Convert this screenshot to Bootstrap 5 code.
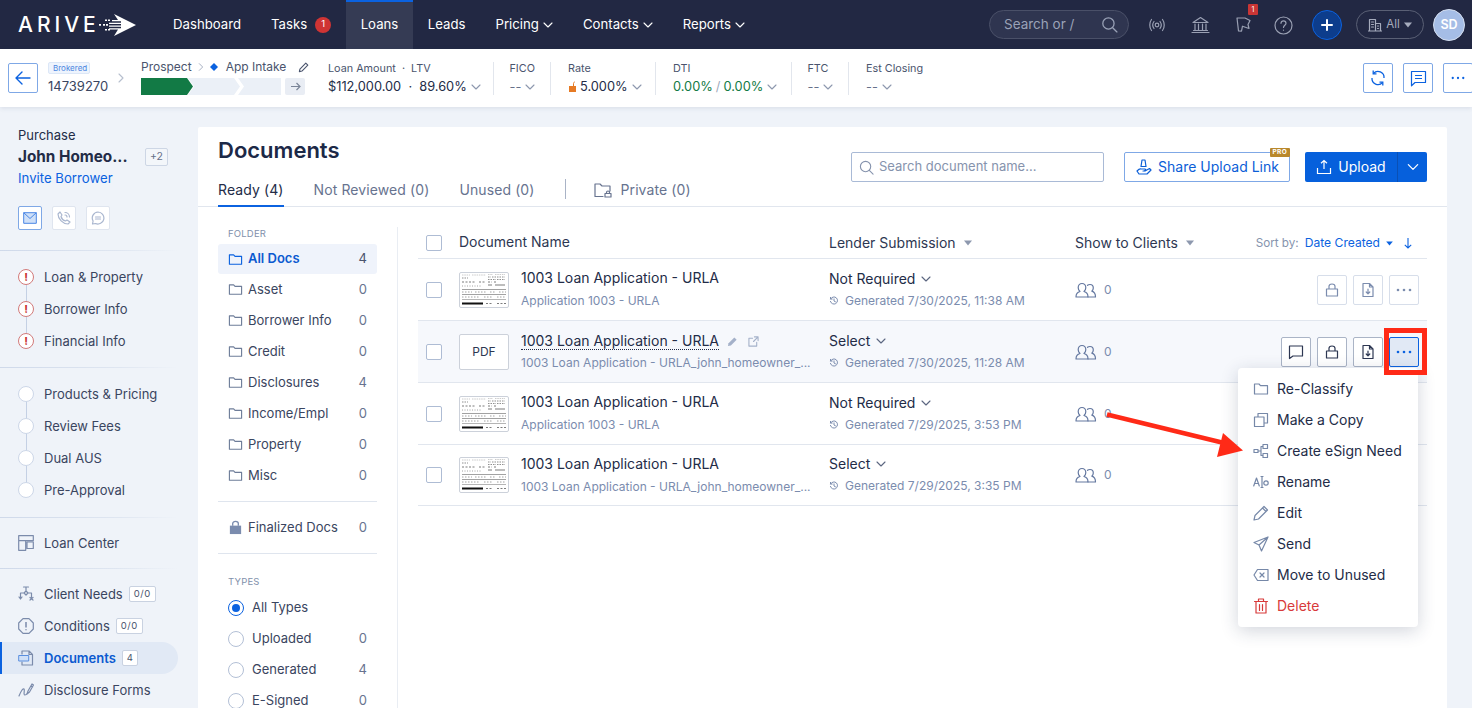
<!DOCTYPE html>
<html lang="en"><head><meta charset="utf-8"><title>Documents</title>
<link href="https://cdn.jsdelivr.net/npm/bootstrap@5.3.0/dist/css/bootstrap.min.css" rel="stylesheet">
<style>
html,body{height:708px;overflow:hidden}
body{font-family:Inter,"Liberation Sans",sans-serif;font-size:13px;color:#232c47;background:#eff3f9;position:relative}
svg{display:block;flex:none}
.ic{fill:none;stroke:currentColor;stroke-width:1.2;stroke-linecap:round;stroke-linejoin:round}
/* top bar */
.topbar{height:49px;background:#222843;padding:0;align-items:stretch;flex-wrap:nowrap;justify-content:flex-start}
.logo{width:158px;padding-left:18px;color:#fff;display:flex;align-items:center;gap:0}
.logo-t{font-size:21px;font-weight:500;letter-spacing:4px;line-height:1}
.tnav{display:flex;align-items:center;padding:0 15px 2px;color:#fff;font-size:13.2px;text-decoration:none;gap:3px;border-top:2px solid transparent}
.tnav.on{background:#353b54;border-top-color:#0b62e0;padding:0 14.5px 2px}
.tnav.nx{padding-left:14px}
.tbadge{background:#cf3434;border-radius:50%;width:16px;height:16px;font-size:9.5px;display:flex;align-items:center;justify-content:center;margin-left:5px;color:#fff}
.tsearch{width:140px;height:29px;border:1px solid #4a5068;background:#2f3550;border-radius:15px;color:#9aa2b7;font-size:13.5px;display:flex;align-items:center;justify-content:space-between;padding:0 10px 0 14px;margin-top:10px}
.tico{color:#9aa0b3;position:relative;display:flex;align-items:center;justify-content:center;height:18px;margin-top:16px}
.plus{width:30px;height:30px;border-radius:50%;background:#0d3d8c;border:1px solid #0b62e0;color:#fff;display:flex;align-items:center;justify-content:center;margin:10px 0 0 19px}
.allp{width:68px;height:29px;border:1px solid #5a6075;border-radius:15px;color:#a6acbd;font-size:11.5px;display:flex;align-items:center;gap:4px;justify-content:center;margin:10px 0 0 14px}
.avat{width:32px;height:32px;border-radius:50%;background:#a5bde6;border:1px solid #d5dff0;color:#fff;font-weight:600;font-size:12.5px;display:flex;align-items:center;justify-content:center;margin:9px 7px 0 9px}
.fbadge{position:absolute;top:-12px;right:-6px;background:#c93535;color:#fff;font-size:7px;width:10px;height:11px;border-radius:1px;display:flex;align-items:center;justify-content:center;line-height:1}
/* loan bar */
.loanbar{height:58px;background:#fff;box-shadow:0 1px 5px rgba(40,60,100,.12);position:relative;padding:0 0 0 8px}
.sqbtn{width:30px;height:30px;border:1px solid #7fa8e6;border-radius:2px;background:#fff;color:#0b62e0;display:flex;align-items:center;justify-content:center;padding:0;flex:none}
.brk{font-size:8px;line-height:10px;color:#4c86e0;background:#eef4fd;border:1px solid #dce7f7;border-radius:2px;padding:0 4px;display:block;width:42px;white-space:nowrap}
.loanid{font-size:13px;line-height:18px;margin-top:3px;color:#3a4560}
.lbl{font-size:10.8px;line-height:14px;color:#4a546d;white-space:nowrap}
.stageh{font-size:12px;margin-top:-1px;gap:4px}
.val{font-size:12.8px;line-height:18px;color:#232c47;display:flex;align-items:center;gap:3px;white-space:nowrap;margin-top:2px}
.val.nil{color:#66718a}
.stat{padding:0 15.5px;border-right:1px solid #e2e6ed;height:33px}
.stat.last{border:0}
.chev{color:#8d98ae}
.stage{display:flex;height:17px;margin-top:4px;gap:0}
.stagego{width:20px;height:17px;background:#e9edf4;border-radius:2px;margin-left:4px;color:#7b8598;display:flex;align-items:center;justify-content:center}
.grn{color:#127a45}
/* side */
.sidebar{width:198px;flex:none;padding-top:20px}
.sname{font-size:15.3px;font-weight:700;line-height:22px;color:#232c47}
.plus2{font-size:10.5px;color:#66718a;border:1px solid #cdd6e5;background:#f3f6fa;width:23px;height:18px;border-radius:2px;display:flex;align-items:center;justify-content:center}
.invite{color:#0b62e0;font-size:13.2px;line-height:20px}
.sq24{width:24px;height:24px;background:#fff;border:1px solid #dfe5ef;border-radius:2px;color:#a9b6cf;display:flex;align-items:center;justify-content:center}
.sq24.on{border-color:#7fa8e6;color:#4a86e4}
.sdiv{height:1px;background:linear-gradient(90deg,#cfd9ea 0,#dfe6f1 60%,#eff3f9 90%);margin:0}
.sitem{height:32px;display:flex;align-items:center;padding-left:18px;gap:10px;font-size:13px;color:#3a4560;position:relative;width:178px;white-space:nowrap}
.sitem .slabel{line-height:1}
.tl::before{content:"";position:absolute;left:26px;top:0;bottom:0;width:1px;background:#c4d0e4}
.tl.first::before{top:16px}.tl.end::before{bottom:16px}
.dot{width:16px;height:16px;border-radius:50%;background:#fff;border:1px solid #cdd7e8;position:relative;flex:none}
.warn{width:16px;height:16px;border-radius:50%;background:#fff;border:1.5px solid #d27a7a;color:#c72f2f;font-weight:700;font-size:11px;display:flex;align-items:center;justify-content:center;position:relative;flex:none;line-height:1}
.sico{width:16px;display:flex;justify-content:center;color:#7b8bab;flex:none}
.cntb{font-size:9.5px;border:1px solid #c9d2e1;background:#fff;border-radius:2px;padding:0 4px;line-height:14px;color:#4a546d;letter-spacing:.5px;margin-left:-4px;font-weight:400}
.sitem.on{background:#e1e9f5;border-left:2px solid #0b62e0;border-radius:0 16px 16px 0;padding-left:16px;color:#0b5ad0;font-weight:600}
/* card */
.doccard{border:0;border-radius:2px;width:1249px;height:620px;margin-top:20px;flex:none;overflow:visible}
.dhead{height:80px;border-bottom:1px solid #e1e6ee;padding:0 20px}
.dtitle{font-size:22px;font-weight:600;line-height:26px;color:#1c2947;padding-top:10px;margin:0}
.tabx{font-size:14px;letter-spacing:.1px;color:#67738f;line-height:20px;padding:0 0 5px;text-decoration:none;border-bottom:2px solid transparent;display:flex;gap:9px;align-items:center;white-space:nowrap;margin-bottom:-1px}
.tabx.on{color:#232c47;border-color:#0b62e0}
.tabx.priv{margin-left:-2px}
.tsep{width:1px;height:20px;background:#a9b3c6;margin:0 0 7px}
.dsearch{width:253px;height:30px;border:1px solid #a9bad6;border-radius:2px;color:#8693ad;font-size:13px;display:flex;align-items:center;gap:5px;padding:0 7px;background:#fff}
.shbtn{width:166px;height:30px;padding:0 0 1px;border:1px solid #7fa8e6;border-radius:2px;color:#0b5ed7;background:#fff;font-size:14px;display:flex;align-items:center;justify-content:center;gap:5px;position:relative;white-space:nowrap;margin:0 15px 0 20px}
.pro{position:absolute;top:-5px;right:-1px;background:#b9882c;color:#fff;font-size:6.5px;font-weight:700;border-radius:1px;padding:0 3px;line-height:9px;letter-spacing:.3px}
.upbtn{width:92px;height:30px;background:#0660dc;color:#fff;border:0;border-radius:2px 0 0 2px;font-size:14px;display:flex;align-items:center;justify-content:center;gap:6px;padding:0 0 1px}
.upcar{width:30px;height:30px;background:#0660dc;border:0;border-left:1px solid #0a50b5;border-radius:0 2px 2px 0;color:#fff;display:flex;align-items:center;justify-content:center;padding:0}
.fcol{width:179px;flex:none;padding:21px 0 0 20px}
.fcap{font-size:9.5px;color:#8190ab;padding-left:10px;line-height:12px;letter-spacing:.2px;margin-bottom:4px}
.fcap.ty{margin-top:22px}
.fit{height:31px;display:flex;align-items:center;padding:0 10px;gap:5px;color:#3a4560;font-size:13px}
.fit>svg{color:#6e7d99}
.fit span:last-child{margin-left:auto;color:#67738f}
.fit.on{background:#eff3fb;color:#0b5ad0;font-weight:600;border-radius:3px;height:30px}
.fit.on>svg{color:#0b62e0}
.fit.on span:last-child{font-weight:400;color:#4a546d}
.fit.fin{height:51px}
.fit.fin>svg{color:#7b8cae}
.fdiv{height:1px;background:#dfe5ee;margin:0}
.fdiv.a{margin-top:10px}
.ricon{width:16px;height:16px;border-radius:50%;border:1px solid #b3c0d6;background:#fff;margin-right:3px;flex:none}
.ricon.on{border:1.5px solid #0b62e0;display:flex;align-items:center;justify-content:center}
.ricon.on::after{content:"";width:8px;height:8px;border-radius:50%;background:#0b62e0}
.tarea{flex:1;border-left:1px solid #e9edf3;margin:20px 20px 0 20px;padding:1px 0 0 20px;min-width:0;position:relative}
.trow{display:flex;align-items:center;height:62px;border-bottom:1px solid #e1e6ee;padding-left:8px}
.trow.hd{height:31px;padding-left:8px;font-size:14px;color:#2d3752}
.trow.hov{background:#f6f8fc}
.trow.lastr{height:61px}
.hname{width:370px;margin-bottom:3px}
.hlend{width:246px;padding-bottom:1px}
.hshow{padding-bottom:1px}
.caret{color:#8d98ae}
.hsort{font-size:11.7px;color:#8693ad;gap:6px;white-space:nowrap;padding-top:1px}
.hsort .sel{color:#0b62e0;font-size:12.1px}
.hsort svg{color:#0b62e0}
.hsort svg.dn{margin-right:14px;margin-left:4px}
.cbx{width:16px;height:16px;border:1px solid #aebcd4;border-radius:2px;background:#fff;flex:none;margin-right:17px}
.thumb{width:50px;height:36px;border:1px solid #ccd1da;border-radius:2px;background:#fff;flex:none;margin-right:12px;overflow:hidden;display:flex;align-items:center;justify-content:center;font-size:12px;color:#2d3752}
.c1{width:308px;flex:none;min-width:0;padding-bottom:2px}
.hov .c1{padding-bottom:0}
.nm{font-size:14px;line-height:20px;color:#232c47;white-space:nowrap;display:flex;align-items:center}
.nm .dt{border-bottom:1px dotted #232c47;line-height:17px}
.sb{font-size:12px;line-height:16px;color:#7b8cae;margin-top:5px;white-space:nowrap}
.c2{width:246px;flex:none;padding-bottom:2px}
.c2 .nm{gap:5px}
.c2 .nm svg{color:#5b6680}
.gen{display:flex;align-items:center;gap:6px;font-size:12px;color:#7b8cae;line-height:16px;margin-top:4px;white-space:nowrap}
.c3{display:flex;align-items:center;gap:7px;color:#7b8cae;font-size:12px;width:120px}
.c3 svg{color:#6478a0}
.edt{color:#a4b1c9;margin-left:8px}
.ext{color:#a4b1c9;margin-left:10px}
.acts{margin-left:auto;display:flex;gap:6px;padding-right:8px}
.ab{width:30px;height:30px;border:1px solid #d7deea;border-radius:2px;background:#fff;color:#7b8cae;display:flex;align-items:center;justify-content:center;padding:0}
.hov .ab{border-color:#aab4c6;color:#2d3752}
.hov .ab.act{border-color:#0b62e0;background:#e1e9f5;color:#0b62e0}
.moremenu{position:absolute;right:9px;top:141px;width:180px;height:259px;border:0;border-radius:4px;box-shadow:0 4px 18px rgba(30,45,80,.2);padding:5px 0;display:block;z-index:5}
.moremenu .dropdown-item{height:31px;display:flex;align-items:center;gap:8px;padding:0 15px;font-size:14px;color:#232c47}
.moremenu .dropdown-item svg{color:#7688a8}
.moremenu .del,.moremenu .del svg{color:#d83a3a}
.hbox{position:absolute;left:1384px;top:328px;width:43px;height:47px;border:5px solid #ff2a17;z-index:6}
.harrow{position:absolute;left:1100px;top:405px;z-index:6}
</style></head><body>
<svg width="0" height="0" style="position:absolute">
<defs>
<symbol id="chev" viewBox="0 0 12 12"><path d="M2 4l4 4 4-4" fill="none" stroke="currentColor" stroke-width="1.1" stroke-linecap="round" stroke-linejoin="round"/></symbol>
<symbol id="folder" viewBox="0 0 16 16"><path class="ic" d="M1.500 3h4.500l1.500 1.700h7v8.300h-13z"/></symbol>
<symbol id="lock" viewBox="0 0 16 16"><path class="ic" d="M2.500 7h11v7h-11zM5 7V4.300C5 2.900 6.200 2 8 2s3 .9 3 2.300V7"/></symbol>
<symbol id="ddoc" viewBox="0 0 16 16"><path class="ic" d="M3 1.500h6.500L13 5v9.500H3zM9.500 1.500V5H13"/><path class="ic" d="M8 7v4.500M6.200 10L8 11.800 9.800 10"/></symbol>
<symbol id="dots" viewBox="0 0 18 16"><circle cx="3" cy="8" r="1.300" fill="currentColor"/><circle cx="9" cy="8" r="1.300" fill="currentColor"/><circle cx="15" cy="8" r="1.300" fill="currentColor"/></symbol>
<symbol id="ppl" viewBox="0 0 22 16"><path class="ic" d="M1 15c0-3 2-5 4-5.500C3.800 8.500 3.200 7.300 3.200 5.800 3.200 3.400 4.800 1.500 7 1.500s3.800 1.900 3.800 4.300c0 1.500-.6 2.700-1.800 3.700 2 .5 4 2.500 4 5.500z"/><path class="ic" d="M12.500 3.300c.7-.6 1.500-.8 2.500-.8 2 0 3.300 1.600 3.300 3.500 0 1.300-.6 2.400-1.500 3.200 1.900.5 3.700 2.500 3.700 5.800h-7.500"/></symbol>
<symbol id="hist" viewBox="0 0 12 12"><path class="ic" d="M2 3.500A4.300 4.300 0 1 1 1.700 6.500M1.800 1.700v2h2M6 3.500V6l1.800 1"/></symbol>
<symbol id="caretd" viewBox="0 0 8 6"><path d="M0 .5h8L4 5.500z" fill="currentColor"/></symbol>
<symbol id="thumbimg" viewBox="0 0 50 36"><g stroke="#444" fill="none"><path d="M3 3h8M13 3h14M29 2.500h5M36 2.500h10" stroke-width=".5" stroke-dasharray="1.500 .8" stroke="#999"/><path d="M3 6h6M29 5h3M33 5h13M29 7.500h8M38 7.500h8" stroke-width=".6" stroke-dasharray="1.500 1"/><path d="M3 10h14M20 10h6M29 10h4M35 10h3" stroke-width=".7" stroke-dasharray="2 1.500"/><path d="M29 13h4M36 13h10" stroke-width=".7"/><path d="M3 14h20" stroke-width=".5" stroke-dasharray="1 1.500"/><path d="M3 17.500h44" stroke-width=".5"/><path d="M3 20h10M16 20h12M31 20h6M40 20h7" stroke-width=".5" stroke-dasharray="1.500 1.500"/><path d="M3 22.500h44" stroke-width=".5"/><path d="M3 25h18M25 25h8M38 25h9" stroke-width=".5" stroke-dasharray="1.500 1.500"/><path d="M3 27.500h44" stroke-width=".4"/><path d="M3 31.500h21" stroke-width="1.800" stroke="#111"/><path d="M27 31.500h6M38 31.500h9" stroke-width=".7" stroke-dasharray="2 1.500"/></g></symbol>
</defs></svg>

<nav class="navbar topbar">
  <a class="logo text-decoration-none"><span class="logo-t">ARIVE</span>
    <svg width="38" height="22" viewBox="0 0 38 22" fill="#fff" style="margin-left:-1px"><path d="M15 0l22 11-22 11 4-6.500h-9v-1.300h12V12.800H10v-1.300h12V10H10V8.700h12V7.300H13V6h6z"/><path d="M6 5.500h2v1.500H6zM9 5.500h2v1.500H9zM0 10h2v1.700H0zM4 10h2v1.700H4zM7 10h2v1.700H7zM6 15h2v1.500H6zM9 15h2v1.500H9z"/></svg>
  </a>
  <a class="tnav">Dashboard</a>
  <a class="tnav">Tasks<span class="tbadge">1</span></a>
  <a class="tnav on">Loans</a>
  <a class="tnav">Leads</a>
  <a class="tnav">Pricing<svg width="12" height="12"><use href="#chev"/></svg></a>
  <a class="tnav nx">Contacts<svg width="12" height="12"><use href="#chev"/></svg></a>
  <a class="tnav nx">Reports<svg width="12" height="12"><use href="#chev"/></svg></a>
  <div class="ms-auto d-flex align-items-start">
    <div class="tsearch">Search or /<svg width="17" height="17" viewBox="0 0 16 16"><circle class="ic" cx="7" cy="7" r="5.300"/><path class="ic" d="M11 11l4 4"/></svg></div>
    <div class="tico"><svg width="18" height="16" viewBox="0 0 18 16" style="margin-left:19px"><circle class="ic" cx="9" cy="8" r="1.800"/><path class="ic" d="M6 4.500c-1.500 2-1.500 5 0 7M12 4.500c1.500 2 1.500 5 0 7M3.500 2.500c-2.300 3-2.300 8 0 11M14.500 2.500c2.300 3 2.300 8 0 11"/></svg></div>
    <div class="tico"><svg width="19" height="18" viewBox="0 0 19 18" style="margin-left:25px"><path class="ic" d="M2 6.500L9.500 1.500 17 6.500zM4 8v6M7.500 8v6M11.500 8v6M15 8v6M2.500 14.500h14M1 16.500h17"/></svg></div>
    <div class="tico"><svg width="17" height="18" viewBox="0 0 17 18" style="margin-left:25px"><path class="ic" d="M2 2h8l5 2.500-2 4 1 4-6.500-2.300-1 5L3.500 15z"/></svg><span class="fbadge">1</span></div>
    <div class="tico"><svg width="19" height="19" viewBox="0 0 19 19" style="margin-left:22px"><circle class="ic" cx="9.500" cy="9.500" r="8.500"/><path class="ic" d="M7 7.300c0-1.500 1.100-2.500 2.500-2.500S12 5.800 12 7.200c0 2-2.500 2-2.500 4.200M9.500 14v.2"/></svg></div>
    <div class="plus"><svg width="14" height="14" viewBox="0 0 14 14"><path d="M7 2v10M2 7h10" stroke="#fff" stroke-width="2" stroke-linecap="round"/></svg></div>
    <div class="allp"><svg width="14" height="14" viewBox="0 0 14 14"><path class="ic" d="M1.500 13V1.500h6V13M7.500 5.500h5V13M0 13h14M3.500 4h2M3.500 6.500h2M3.500 9h2M9.500 8h1M9.500 10.500h1"/></svg>All<svg width="8" height="6"><use href="#caretd"/></svg></div>
    <div class="avat">SD</div>
  </div>
</nav>

<header class="loanbar d-flex align-items-center">
  <button class="sqbtn"><svg width="16" height="14" viewBox="0 0 16 14"><path d="M15 7H1.500M7 1L1 7l6 6" fill="none" stroke="currentColor" stroke-width="1.400" stroke-linecap="round" stroke-linejoin="round"/></svg></button>
  <div style="margin-left:10px;width:70px"><span class="brk">Brokered</span><div class="loanid">14739270</div></div>
  <svg width="12" height="12" style="margin-left:-3px;color:#b6bfce"><use href="#chev" transform="rotate(-90 6 6)"/></svg>
  <div style="margin-left:14px;width:187px">
    <div class="d-flex align-items-center lbl stageh">Prospect<svg width="10" height="10" style="color:#a0aabd"><use href="#chev" transform="rotate(-90 5 5)"/></svg><svg width="8" height="8" viewBox="0 0 8 8"><path d="M4 0l4 4-4 4-4-4z" fill="#0b62e0"/></svg><span class="ms-1">App Intake</span><svg class="ms-2" width="11" height="11" viewBox="0 0 12 12"><path class="ic" d="M1.500 10.500l.6-2.800L8.500 1.300l2.200 2.200-6.400 6.400z"/></svg></div>
    <div class="stage">
      <svg width="140" height="17" viewBox="0 0 140 17"><path d="M0 0h46l6 8.500-6 8.500H0z" fill="#127a45"/><path d="M47 0h46l6 8.500-6 8.500H47l6-8.500zM97 0h43v17H97l6-8.500z" fill="#ebf0f7"/></svg>
      <div class="stagego"><svg width="11" height="9" viewBox="0 0 11 9"><path d="M1 4.500h9M6.500 1L10 4.500 6.500 8" fill="none" stroke="currentColor" stroke-width="1.200"/></svg></div>
    </div>
  </div>
  <div class="stat" style="padding-left:0;width:166px"><div class="lbl">Loan Amount &nbsp;·&nbsp; LTV</div><div class="val">$112,000.00 &nbsp;·&nbsp; 89.60%<svg class="chev" width="12" height="12"><use href="#chev"/></svg></div></div>
  <div class="stat" style="width:57px"><div class="lbl">FICO</div><div class="val nil">--<svg class="chev" width="12" height="12"><use href="#chev"/></svg></div></div>
  <div class="stat" style="width:105px;padding-left:17px"><div class="lbl">Rate</div><div class="val"><svg width="9" height="11" viewBox="0 0 9 11"><path d="M1 5h7v6H1z" fill="#e67a24"/><path d="M5.500 5V2.500c0-1 .7-1.500 1.300-1.500" fill="none" stroke="#e67a24"/></svg>5.000%<svg class="chev" width="12" height="12"><use href="#chev"/></svg></div></div>
  <div class="stat" style="width:136px;padding-left:17px"><div class="lbl">DTI</div><div class="val"><span class="grn">0.00%</span><span style="color:#a0aabd">/</span><span class="grn">0.00%</span><svg class="chev" width="12" height="12"><use href="#chev"/></svg></div></div>
  <div class="stat" style="width:57px"><div class="lbl">FTC</div><div class="val nil">--<svg class="chev" width="12" height="12"><use href="#chev"/></svg></div></div>
  <div class="stat last" style="padding-left:17px"><div class="lbl">Est Closing</div><div class="val nil">--<svg class="chev" width="12" height="12"><use href="#chev"/></svg></div></div>
  <div class="ms-auto d-flex" style="gap:10px;margin-right:-1px">
    <button class="sqbtn"><svg width="16" height="18" viewBox="0 0 16 18"><path d="M3.500 4.500A6 6 0 0 1 14 9M12.500 13.500A6 6 0 0 1 2 9" fill="none" stroke="currentColor" stroke-width="1.300"/><path d="M3.200 1.500v3.300h3.300M12.800 16.500v-3.300H9.500" fill="none" stroke="currentColor" stroke-width="1.300"/></svg></button>
    <button class="sqbtn"><svg width="17" height="17" viewBox="0 0 17 17"><path d="M1.500 1.500h14v11H5l-3.500 3.300z" fill="none" stroke="currentColor" stroke-width="1.200" stroke-linejoin="round"/><path d="M5 5.500h7M5 8.500h7" stroke="currentColor" stroke-width="1.200"/></svg></button>
    <button class="sqbtn"><svg width="16" height="14"><use href="#dots"/></svg></button>
  </div>
</header>

<div class="d-flex">
  <aside class="sidebar">
    <div style="padding-left:18px;height:123px">
      <div style="line-height:16px;font-size:13px;color:#232c47">Purchase</div>
      <div class="d-flex align-items-center justify-content-between" style="width:150px;margin-top:3px"><span class="sname">John Homeo...</span><span class="plus2">+2</span></div>
      <div class="invite">Invite Borrower</div>
      <div class="d-flex" style="gap:10px;margin-top:18px">
        <div class="sq24 on"><svg width="14" height="12" viewBox="0 0 14 12"><path d="M.7.7h12.600v10.600H.7z" fill="#cfe0f8" stroke="currentColor"/><path d="M.7.7L7 6.500 13.300.7" fill="none" stroke="currentColor"/></svg></div>
        <div class="sq24"><svg width="14" height="14" viewBox="0 0 14 14"><path class="ic" d="M3 1L1 3c0 5 5 10 10 10l2-2-3-2-1.500 1C6.500 9.500 4.500 7.500 4 5.500L5 4zM8 1.500c2.500 0 4.500 2 4.500 4.500M8 4c1 0 2 1 2 2"/></svg></div>
        <div class="sq24"><svg width="14" height="14" viewBox="0 0 14 14"><path class="ic" d="M7 1a6 6 0 1 1-2.500 11.500L1.500 13l.6-3A6 6 0 0 1 7 1zM4.500 6h5M4.500 8h5"/></svg></div>
      </div>
    </div>
    <div class="sdiv"></div>
    <div style="padding:10px 0">
      <div class="sitem tl first"><span class="warn">!</span><span class="slabel">Loan &amp; Property</span></div>
      <div class="sitem tl"><span class="warn">!</span><span class="slabel">Borrower Info</span></div>
      <div class="sitem tl end"><span class="warn">!</span><span class="slabel">Financial Info</span></div>
    </div>
    <div class="sdiv"></div>
    <div style="padding:10px 0 11px">
      <div class="sitem tl first"><span class="dot"></span><span class="slabel">Products &amp; Pricing</span></div>
      <div class="sitem tl"><span class="dot"></span><span class="slabel">Review Fees</span></div>
      <div class="sitem tl"><span class="dot"></span><span class="slabel">Dual AUS</span></div>
      <div class="sitem tl end"><span class="dot"></span><span class="slabel">Pre-Approval</span></div>
    </div>
    <div class="sdiv"></div>
    <div style="padding:9px 0">
      <div class="sitem"><span class="sico"><svg width="16" height="16" viewBox="0 0 16 16"><path class="ic" d="M.7.7h14.600v5H.7zM.7 5.700h7v9.600h-7zM9 7h6.300v6.500H9z"/></svg></span><span class="slabel">Loan Center</span></div>
    </div>
    <div class="sdiv"></div>
    <div style="padding:9px 0 0">
      <div class="sitem"><span class="sico"><svg width="16" height="16" viewBox="0 0 16 16"><path class="ic" d="M5.500 1h5M8 1v4M8 5l2 2-2 2-2-2zM6 7H2.500v5M10 7h3.500v5M1 11l1.500 2L4 11M12 11.500l3 2.500M15 11.500l-3 2.500"/></svg></span><span class="slabel">Client Needs</span><span class="cntb">0/0</span></div>
      <div class="sitem"><span class="sico"><svg width="16" height="16" viewBox="0 0 16 16"><path class="ic" d="M5 .7h6L15.300 5v6L11 15.300H5L.7 11V5z"/><path d="M8 4v5.500M8 11.300v1" stroke="currentColor" stroke-width="1.500"/></svg></span><span class="slabel">Conditions</span><span class="cntb">0/0</span></div>
      <div class="sitem on"><span class="sico"><svg width="16" height="16" viewBox="0 0 16 16"><path class="ic" d="M4 4V1h7l3.500 3.500V15H4V12M11 1v3.500h3.500"/><path d="M.7 5.500h10v5.500H.7z" fill="#cfe0f8" stroke="#5a8fdf"/></svg></span><span class="slabel">Documents</span><span class="cntb">4</span></div>
      <div class="sitem"><span class="sico"><svg width="16" height="16" viewBox="0 0 16 16"><path class="ic" d="M1 14C3 9 5 6 6 7s-1 6 1 6c1 0 1.500-.5 2-1.500M9 12l1-3 4-7 1.500 1-4 7zM13 4l1.500 1"/></svg></span><span class="slabel">Disclosure Forms</span></div>
    </div>
  </aside>

  <main class="card doccard">
    <div class="dhead d-flex justify-content-between">
      <div class="d-flex flex-column justify-content-between">
        <h1 class="dtitle">Documents</h1>
        <div class="d-flex align-items-end" style="gap:30px">
          <a class="tabx on">Ready (4)</a><a class="tabx">Not Reviewed (0)</a><a class="tabx">Unused (0)</a><span class="tsep"></span>
          <a class="tabx priv"><svg width="18" height="15" viewBox="0 0 18 15"><path class="ic" d="M9 13.500H1V1h5l2 2h8v5M11 10.500h6v3.500h-6zM12.500 10.500V9.500a1.500 1.500 0 0 1 3 0v1"/></svg>Private (0)</a>
        </div>
      </div>
      <div class="d-flex" style="padding-top:25px;height:55px">
        <div class="dsearch"><svg width="15" height="15" viewBox="0 0 16 16"><circle class="ic" cx="7" cy="7" r="5.500"/><path class="ic" d="M11 11l4 4"/></svg>Search document name...</div>
        <button class="shbtn"><svg width="18" height="18" viewBox="0 0 18 18"><path class="ic" d="M7 2h3l1 6.500H6zM2 13c2-2 3-2.500 4-2h4c1 0 1 2-1 2h-1M2 13l2 3h8l4-4-1.500-1.500L10 13"/></svg>Share Upload Link<span class="pro">PRO</span></button>
        <div class="btn-group"><button class="upbtn"><svg width="16" height="16" viewBox="0 0 16 16"><path d="M8 10V1.500M5 4.300L8 1.500l3 2.800M1.500 9v5.500h13V9" fill="none" stroke="#fff" stroke-width="1.200"/></svg>Upload</button><button class="upcar"><svg width="14" height="14"><use href="#chev"/></svg></button></div>
      </div>
    </div>
    <div class="d-flex flex-grow-1" style="min-height:0">
      <div class="fcol">
        <div class="fcap">FOLDER</div>
        <div class="fit on"><svg width="15" height="15"><use href="#folder"/></svg><span>All Docs</span><span>4</span></div>
        <div class="fit"><svg width="15" height="15"><use href="#folder"/></svg><span>Asset</span><span>0</span></div>
        <div class="fit"><svg width="15" height="15"><use href="#folder"/></svg><span>Borrower Info</span><span>0</span></div>
        <div class="fit"><svg width="15" height="15"><use href="#folder"/></svg><span>Credit</span><span>0</span></div>
        <div class="fit"><svg width="15" height="15"><use href="#folder"/></svg><span>Disclosures</span><span>4</span></div>
        <div class="fit"><svg width="15" height="15"><use href="#folder"/></svg><span>Income/Empl</span><span>0</span></div>
        <div class="fit"><svg width="15" height="15"><use href="#folder"/></svg><span>Property</span><span>0</span></div>
        <div class="fit"><svg width="15" height="15"><use href="#folder"/></svg><span>Misc</span><span>0</span></div>
        <div class="fdiv a"></div>
        <div class="fit fin"><svg width="15" height="15" viewBox="0 0 16 16"><path d="M2 6h12v9H2z" fill="currentColor"/><path d="M5 6V3.800C5 2.400 6.200 1.500 8 1.500s3 .9 3 2.300V6" fill="none" stroke="currentColor" stroke-width="1.400"/></svg><span>Finalized Docs</span><span>0</span></div>
        <div class="fdiv"></div>
        <div class="fcap ty">TYPES</div>
        <div class="fit"><span class="ricon on"></span><span>All Types</span><span></span></div>
        <div class="fit"><span class="ricon"></span><span>Uploaded</span><span>0</span></div>
        <div class="fit"><span class="ricon"></span><span>Generated</span><span>4</span></div>
        <div class="fit"><span class="ricon"></span><span>E-Signed</span><span>0</span></div>
      </div>
      <div class="tarea">
        <div class="trow hd">
          <span class="cbx"></span>
          <div class="hname">Document Name</div>
          <div class="hlend d-flex align-items-center gap-2">Lender Submission<svg class="caret" width="8" height="6"><use href="#caretd"/></svg></div>
          <div class="hshow d-flex align-items-center gap-2">Show to Clients<svg class="caret" width="8" height="6"><use href="#caretd"/></svg></div>
          <div class="hsort ms-auto d-flex align-items-center">Sort by:<span class="sel">Date Created</span><svg width="7" height="5"><use href="#caretd"/></svg><svg class="dn" width="10" height="12" viewBox="0 0 10 12"><path d="M5 1v10M1.800 7.800L5 11l3.200-3.200" fill="none" stroke="currentColor" stroke-width="1.100"/></svg></div>
        </div>
        <div class="trow">
          <span class="cbx"></span><span class="thumb"><svg width="50" height="36"><use href="#thumbimg"/></svg></span>
          <div class="c1"><div class="nm">1003 Loan Application - URLA</div><div class="sb">Application 1003 - URLA</div></div>
          <div class="c2"><div class="nm">Not Required<svg width="12" height="12"><use href="#chev"/></svg></div><div class="gen"><svg width="10" height="10"><use href="#hist"/></svg>Generated 7/30/2025, 11:38 AM</div></div>
          <div class="c3"><svg width="22" height="16"><use href="#ppl"/></svg>0</div>
          <div class="acts"><button class="ab"><svg width="16" height="16"><use href="#lock"/></svg></button><button class="ab"><svg width="16" height="16"><use href="#ddoc"/></svg></button><button class="ab"><svg width="18" height="16"><use href="#dots"/></svg></button></div>
        </div>
        <div class="trow hov">
          <span class="cbx"></span><span class="thumb">PDF</span>
          <div class="c1"><div class="nm"><span class="dt">1003 Loan Application - URLA</span><svg class="edt" width="11" height="11" viewBox="0 0 12 12"><path d="M1 11l.7-3.200L8 1.500 10.500 4l-6.300 6.300z" fill="currentColor"/></svg><svg class="ext" width="11" height="11" viewBox="0 0 12 12"><path class="ic" d="M9.500 7v4h-8.500v-8.500H5M7 1h4v4M11 1L6 6"/></svg></div><div class="sb">1003 Loan Application - URLA_john_homeowner_...</div></div>
          <div class="c2"><div class="nm">Select<svg width="12" height="12"><use href="#chev"/></svg></div><div class="gen"><svg width="10" height="10"><use href="#hist"/></svg>Generated 7/30/2025, 11:28 AM</div></div>
          <div class="c3"><svg width="22" height="16"><use href="#ppl"/></svg>0</div>
          <div class="acts"><button class="ab"><svg width="16" height="16" viewBox="0 0 16 16"><path class="ic" d="M1.500 2h13v10H5l-3.500 2.500z"/></svg></button><button class="ab"><svg width="16" height="16"><use href="#lock"/></svg></button><button class="ab"><svg width="16" height="16"><use href="#ddoc"/></svg></button><button class="ab act"><svg width="18" height="16"><use href="#dots"/></svg></button></div>
        </div>
        <div class="trow">
          <span class="cbx"></span><span class="thumb"><svg width="50" height="36"><use href="#thumbimg"/></svg></span>
          <div class="c1"><div class="nm">1003 Loan Application - URLA</div><div class="sb">Application 1003 - URLA</div></div>
          <div class="c2"><div class="nm">Not Required<svg width="12" height="12"><use href="#chev"/></svg></div><div class="gen"><svg width="10" height="10"><use href="#hist"/></svg>Generated 7/29/2025, 3:53 PM</div></div>
          <div class="c3"><svg width="22" height="16"><use href="#ppl"/></svg>0</div>
        </div>
        <div class="trow lastr">
          <span class="cbx"></span><span class="thumb"><svg width="50" height="36"><use href="#thumbimg"/></svg></span>
          <div class="c1"><div class="nm">1003 Loan Application - URLA</div><div class="sb">1003 Loan Application - URLA_john_homeowner_...</div></div>
          <div class="c2"><div class="nm">Select<svg width="12" height="12"><use href="#chev"/></svg></div><div class="gen"><svg width="10" height="10"><use href="#hist"/></svg>Generated 7/29/2025, 3:35 PM</div></div>
          <div class="c3"><svg width="22" height="16"><use href="#ppl"/></svg>0</div>
        </div>
        <div class="dropdown-menu moremenu">
          <a class="dropdown-item"><svg width="16" height="16"><use href="#folder"/></svg>Re-Classify</a>
          <a class="dropdown-item"><svg width="16" height="16" viewBox="0 0 16 16"><path class="ic" d="M1.500 5h9.500v9.500H1.500zM5 5V1.500h9.500V11H11"/></svg>Make a Copy</a>
          <a class="dropdown-item"><svg width="16" height="16" viewBox="0 0 16 16"><path class="ic" d="M1 6.500h4v3H1zM5 8h3M8 3.500v9M8 3.500h2M8 12.500h2M10 1.500h4.500v4H10zM10 10.500h4.500v4H10z"/></svg>Create eSign Need</a>
          <a class="dropdown-item"><svg width="16" height="16" viewBox="0 0 16 16"><path class="ic" d="M.7 12L3.500 4 6.300 12M1.700 9.500h3.600M8 2.500h2M8 13.500h2M9 2.500v11"/><circle class="ic" cx="13" cy="9" r="2.200"/></svg>Rename</a>
          <a class="dropdown-item"><svg width="16" height="16" viewBox="0 0 16 16"><path class="ic" d="M1 15l1-4.500L11 1.500 14.500 5l-9 9zM9.500 3L13 6.500"/></svg>Edit</a>
          <a class="dropdown-item"><svg width="16" height="16" viewBox="0 0 16 16"><path class="ic" d="M15 1L1 6.500l5 2.500 2.500 6zM15 1L6 9"/></svg>Send</a>
          <a class="dropdown-item"><svg width="16" height="16" viewBox="0 0 16 16"><path class="ic" d="M4.500 2.500H15v11H4.500L1 8zM7 6l4 4M11 6l-4 4"/></svg>Move to Unused</a>
          <a class="dropdown-item del"><svg width="16" height="16" viewBox="0 0 16 16"><path class="ic" d="M1.500 3.500h13M3 3.500v11.500h10V3.500M5.500 3.500V1h5v2.500M6.500 6.500v6M9.500 6.500v6"/></svg>Delete</a>
        </div>
      </div>
    </div>
  </main>
</div>

<div class="hbox"></div>
<svg class="harrow" width="150" height="60" viewBox="0 0 150 60"><path d="M7 9.500l117 28.500" fill="none" stroke="#ff2a17" stroke-width="4.500"/><path d="M143 45.500L117 52l6-24z" fill="#ff2a17"/></svg>
</body></html>
